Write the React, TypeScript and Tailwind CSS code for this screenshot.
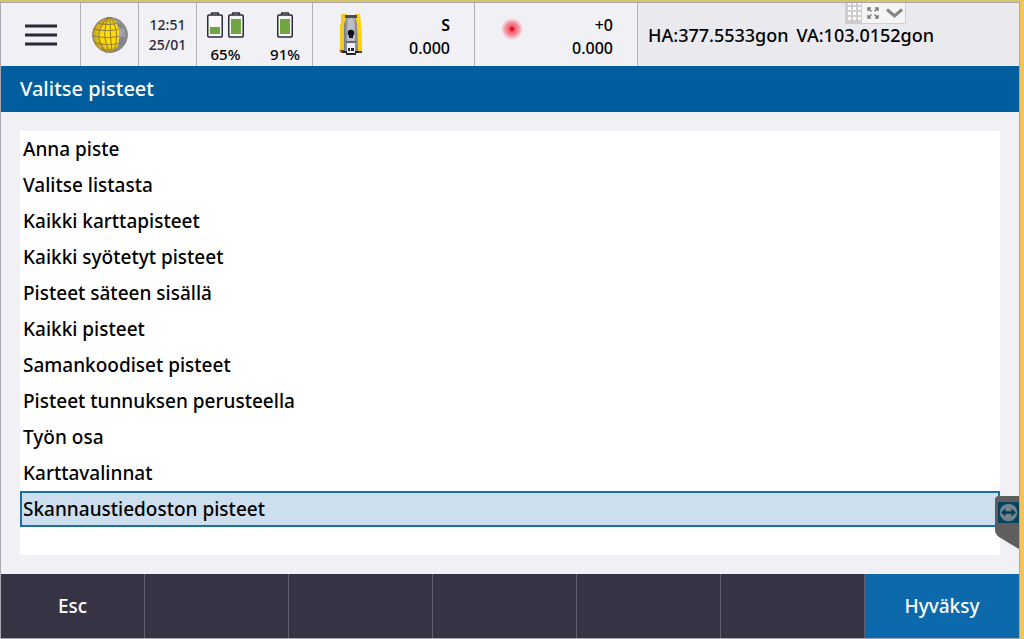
import { useState } from "react";

const options = [
  "Anna piste",
  "Valitse listasta",
  "Kaikki karttapisteet",
  "Kaikki syötetyt pisteet",
  "Pisteet säteen sisällä",
  "Kaikki pisteet",
  "Samankoodiset pisteet",
  "Pisteet tunnuksen perusteella",
  "Työn osa",
  "Karttavalinnat",
  "Skannaustiedoston pisteet",
];

function Battery({ level }: { level: number }) {
  const h = Math.round(level * 15);
  return (
    <svg width="16" height="26" viewBox="0 0 16 26" aria-hidden="true">
      <path d="M4.500 3V1.500Q4.500 1 5 1H11Q11.500 1 11.500 1.500V3" fill="#f1f0f5" stroke="#2b2a35" strokeWidth="1.500" />
      <rect x="0.750" y="3" width="14.500" height="22" rx="1.200" fill="#f7f7fa" stroke="#2b2a35" strokeWidth="1.500" />
      <rect x="3" y={22 - h} width="10" height={h} fill="#6fa642" />
    </svg>
  );
}

function Globe() {
  return (
    <svg width="36" height="36" viewBox="0 0 36 36" aria-hidden="true">
      <defs>
        <radialGradient id="sea" cx="0.5" cy="0.45" r="0.6">
          <stop offset="0.5" stopColor="#a9a9af" />
          <stop offset="1" stopColor="#78787e" />
        </radialGradient>
        <radialGradient id="gold" cx="0.55" cy="0.5" r="0.62">
          <stop offset="0.5" stopColor="#ffdc08" />
          <stop offset="1" stopColor="#a8892c" />
        </radialGradient>
        <clipPath id="grid">
          <path d="M0 4L8 0H20L24 5L25 8L27 12V23L26 28L23 33L18 36H8L0 32Z" />
        </clipPath>
      </defs>
      <circle cx="18" cy="18" r="17.500" fill="url(#sea)" />
      <path d="M24 5L29 7L32 11L29 12L26 10ZM28 19L34 21L30 28L27 31L26 26Z" fill="#85858b" />
      <g clipPath="url(#grid)">
        <circle cx="18" cy="18" r="17.200" fill="url(#gold)" />
        <g fill="none" stroke="#968240" strokeWidth="1.100">
          <path d="M16 0Q-2 18 15 36M17 0Q8 17 18 36M18 0Q18 17 20 36M19 0Q29 17 21 36" />
          <path d="M5 6Q16 9 26 6M1 12Q15 15 28 12M0 19Q15 22 28 19M3 26Q15 29 28 26M8 32Q16 34 25 32" />
        </g>
      </g>
      <circle cx="18" cy="18" r="17.300" fill="none" stroke="#77756c" strokeWidth="0.800" />
    </svg>
  );
}

function Instrument() {
  return (
    <svg width="24" height="42" viewBox="0 0 24 42" aria-hidden="true">
      <defs>
        <linearGradient id="metal">
          <stop offset="0" stopColor="#77787f" />
          <stop offset="0.250" stopColor="#a2a3aa" />
          <stop offset="0.500" stopColor="#c6c7ce" />
          <stop offset="0.750" stopColor="#a2a3aa" />
          <stop offset="1" stopColor="#77787f" />
        </linearGradient>
      </defs>
      <path d="M2 0H8V38H2L0 37L1 34V11L2 8Z" fill="#f3cb1c" />
      <path d="M16 0H21L22 10L23 24V38H16Z" fill="#ffd20a" />
      <path d="M1 36H6V39H2ZM18 37H23V39H18Z" fill="#783218" />
      <path d="M7 1H17V5L18 10L19 38H5V10L7 5Z" fill="url(#metal)" />
      <path d="M6 1H18V4H6Z" fill="#4b4c53" />
      <path d="M9 6H15L16 27H8Z" fill="#bebfc6" />
      <circle cx="12" cy="19" r="3.300" fill="#111118" />
      <path d="M10 20H14V24H10Z" fill="#18181f" />
      <path d="M7 27H17V29H7Z" fill="#666770" />
      <path d="M8 29H16V41H8Z" fill="#eeeef2" />
      <path d="M9 34H11V37H9ZM12 34H15V37H12ZM4 37H8V39H16V37H20V39H17V41H7V39H4Z" fill="#222229" />
    </svg>
  );
}

function Laser() {
  return (
    <svg width="22" height="22" viewBox="0 0 22 22" aria-hidden="true">
      <defs>
        <radialGradient id="beam">
          <stop offset="0" stopColor="#b8040c" />
          <stop offset="0.140" stopColor="#d81c2a" />
          <stop offset="0.280" stopColor="#f2606c" />
          <stop offset="0.600" stopColor="#f4929c" />
          <stop offset="1" stopColor="#f1f0f5" />
        </radialGradient>
      </defs>
      <circle cx="11" cy="11" r="11" fill="url(#beam)" />
    </svg>
  );
}

function SessionToolbar() {
  return (
    <div className="absolute top-0 right-[113px] flex h-[21px] border-r border-b border-[#d0d0d4] bg-[#f5f5f5]">
      <svg width="17" height="21" viewBox="0 0 17 21" aria-hidden="true">
        <path d="M0 0H17V21H0Z" fill="#cdcdcf" />
        <path d="M3 0H6V2H3ZM8 0H11V2H8ZM13 0H16V2H13ZM3 4H6V7H3ZM8 4H11V7H8ZM13 4H16V7H13ZM3 9H6V12H3ZM8 9H11V12H8ZM13 9H16V12H13ZM3 14H6V17H3ZM8 14H11V17H8ZM13 14H16V17H13Z" fill="#fff" />
      </svg>
      <button type="button" aria-label="Koko näyttö" className="flex w-[22px] items-center justify-center">
        <svg width="12" height="12" viewBox="0 0 12 12" fill="none" stroke="#7d7d7d" strokeWidth="1.500">
          <path d="M1 4V1H4M8 1H11V4M11 8V11H8M4 11H1V8M1 1L4.500 4.500M11 1L7.500 4.500M11 11L7.500 7.500M1 11L4.500 7.500" />
        </svg>
      </button>
      <button type="button" aria-label="Avaa valikko" className="flex w-[21px] items-center justify-center">
        <svg width="17" height="10" viewBox="0 0 17 10" fill="none" stroke="#858585" strokeWidth="3">
          <path d="M1 1.500L8.500 8L16 1.500" />
        </svg>
      </button>
    </div>
  );
}

function RemoteTab() {
  return (
    <button type="button" aria-label="Etäyhteys" className="absolute right-0 bottom-[25px] h-[53px] w-6">
      <svg width="24" height="53" viewBox="0 0 24 53" aria-hidden="true">
        <path d="M4 0H24V53L4 41Q0 38 0 34V4Q0 0 4 0Z" fill="#5e5e5e" />
        <path d="M3 6H24V27H3Z" fill="#06445f" />
        <circle cx="13.500" cy="16.500" r="8.700" fill="#71838e" />
        <path d="M6 16.500L10.500 12.500V15.200H16.500V12.500L21 16.500L16.500 20.500V17.800H10.500V20.500Z" fill="#083b55" />
      </svg>
    </button>
  );
}

export default function App() {
  const [selected, setSelected] = useState(options.length - 1);
  return (
    <div className="flex min-h-screen flex-col border-t-2 border-r-4 border-t-[#d9c466] border-r-[#f2c55c] bg-[#f1f0f5] font-['Noto_Sans','Open_Sans',sans-serif] font-medium text-black">
      <div className="flex flex-1 flex-col border border-[#a9a7b2]">
        <header className="relative flex h-[63px] bg-[#f1f0f5] text-base leading-[23px]">
          <button type="button" aria-label="Valikko" className="flex w-20 items-center justify-center border-r border-[#b1b0b8]">
            <svg width="32" height="22" viewBox="0 0 32 22" stroke="#2b2938" strokeWidth="3">
              <path d="M0 2H32M0 11H32M0 20H32" />
            </svg>
          </button>
          <div className="flex w-[58px] items-center justify-center border-r border-[#b1b0b8]">
            <Globe />
          </div>
          <div className="flex w-[58px] flex-col items-center justify-center border-r border-[#b1b0b8] text-sm leading-5 text-[#2b2938]">
            <span>12:51</span>
            <span>25/01</span>
          </div>
          <div className="flex w-[116px] justify-between border-r border-[#b1b0b8] pt-[9px] pr-3 pl-2.5 text-[15px] leading-5">
            <div className="flex flex-col items-center gap-1.5">
              <div className="flex gap-[5px]">
                <Battery level={0.45} />
                <Battery level={1} />
              </div>
              <span>65%</span>
            </div>
            <div className="flex flex-col items-center gap-1.5">
              <Battery level={1} />
              <span>91%</span>
            </div>
          </div>
          <div className="flex w-[162px] justify-between border-r border-[#b1b0b8] pt-[11px] pr-6 pl-[26px]">
            <Instrument />
            <div className="flex flex-col text-right">
              <span className="font-semibold">S</span>
              <span>0.000</span>
            </div>
          </div>
          <div className="flex w-[163px] justify-between border-r border-[#b1b0b8] pt-[11px] pr-6 pl-[26px]">
            <div className="pt-1">
              <Laser />
            </div>
            <div className="flex flex-col text-right">
              <span>+0</span>
              <span>0.000</span>
            </div>
          </div>
          <div className="flex flex-1 gap-2 bg-[#eae9ee] pt-5 pl-2.5 text-lg leading-6">
            <span>HA:377.5533gon</span>
            <span>VA:103.0152gon</span>
          </div>
          <SessionToolbar />
        </header>

        <h1 className="flex h-[46px] items-center bg-[#005d9e] px-[19px] text-xl text-white">Valitse pisteet</h1>

        <main className="relative flex flex-1 flex-col p-[19px]">
          <ul role="listbox" aria-label="Valitse pisteet" className="flex-1 bg-white">
            {options.map((option, i) => (
              <li key={option} role="option" aria-selected={i === selected}>
                <button
                  type="button"
                  onClick={() => setSelected(i)}
                  className={
                    i === selected
                      ? "block h-9 w-full border-2 border-[#1a6fa8] bg-[#cddfee] px-px text-left text-[19px] leading-8"
                      : "block h-9 w-full border-2 border-transparent px-px text-left text-[19px] leading-8"
                  }
                >
                  {option}
                </button>
              </li>
            ))}
          </ul>
          <RemoteTab />
        </main>

        <footer className="grid h-16 grid-cols-[repeat(6,144fr)_154fr] bg-[#363344] text-[19px] text-white">
          <button type="button" className="border-r border-[#625f70]">Esc</button>
          <div className="border-r border-[#625f70]" />
          <div className="border-r border-[#625f70]" />
          <div className="border-r border-[#625f70]" />
          <div className="border-r border-[#625f70]" />
          <div className="border-r border-[#625f70]" />
          <button type="button" className="bg-[#0c69ab]">Hyväksy</button>
        </footer>
      </div>
    </div>
  );
}
